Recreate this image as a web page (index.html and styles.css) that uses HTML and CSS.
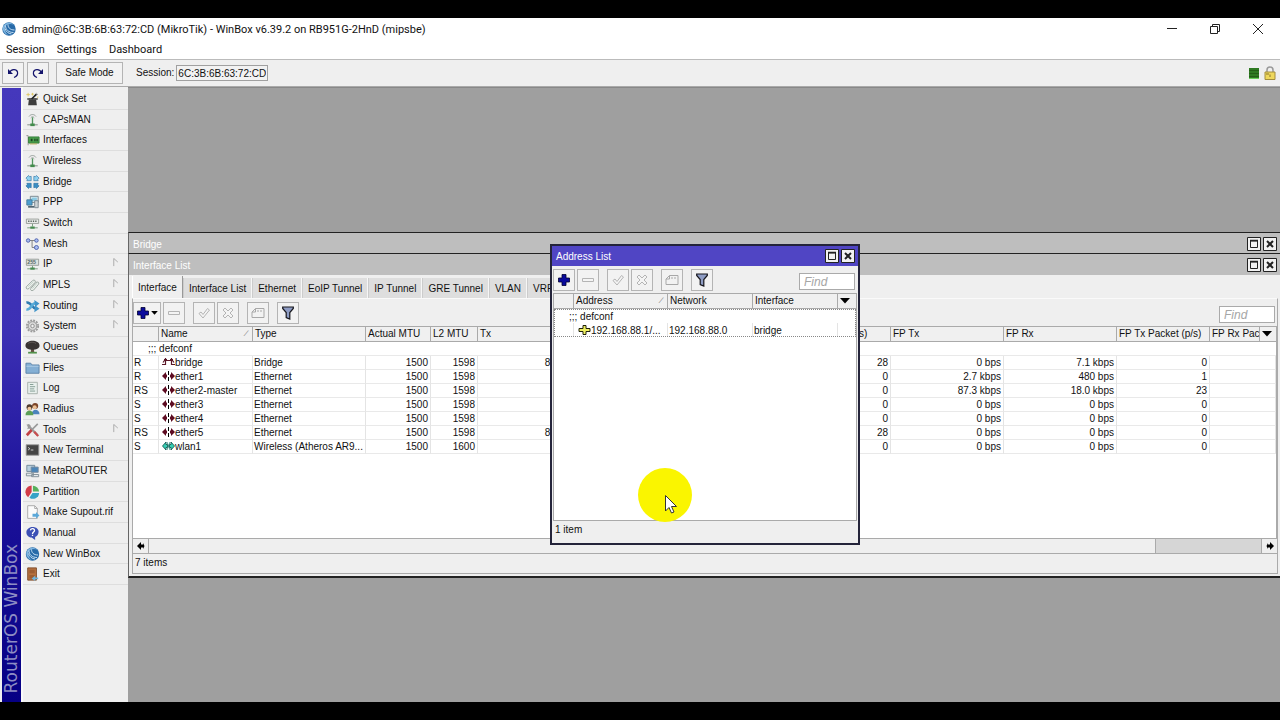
FILE: index.html
```html
<!DOCTYPE html>
<html lang="en">
<head>
<meta charset="utf-8">
<title>WinBox</title>
<link rel="stylesheet" href="styles.css">
</head>
<body>
<svg class="defs" aria-hidden="true">
  <defs>
    <symbol id="plus" viewBox="0 0 12 12"><path d="M4 .5h4V4h3.500v4H8v3.500H4V8H.5V4H4z" fill="#0a0a9c" stroke="#000030" stroke-width=".8"/></symbol>
    <symbol id="minus" viewBox="0 0 12 12"><path d="M.5 4.500h11v3H.5z" fill="#f4f4f4" stroke="#b4b4b4"/></symbol>
    <symbol id="check" viewBox="0 0 12 12"><path d="M1 6.500 3 5l2 2.500L9.500 1.500l2 1.500L5 11z" fill="#f4f4f4" stroke="#b4b4b4"/></symbol>
    <symbol id="cross" viewBox="0 0 12 12"><path d="M1 3 3 1l3 3 3-3 2 2-3 3 3 3-2 2-3-3-3 3-2-2 3-3z" fill="#f4f4f4" stroke="#b4b4b4"/></symbol>
    <symbol id="note" viewBox="0 0 14 12"><path d="M1 10.500V5l3.500-3.500H13v9zM1 5h3.500V1.500M6 4h2M9 4h2" fill="none" stroke="#a8a8a8"/></symbol>
    <symbol id="funnel" viewBox="0 0 12 14"><path d="M.7 1h10.600v1.500L7.800 6.500V13L4.200 11.500v-5L.7 2.500z" fill="#8e9cc4" stroke="#16161c" stroke-width="1.200"/></symbol>
    <symbol id="max" viewBox="0 0 14 14"><path d="M.5.5h13v13H.5z" fill="#f2f2f2" stroke="#222"/><path d="M3.500 4h7v6.500h-7z" fill="#f2f2f2" stroke="#222"/><path d="M3 3.500h8" stroke="#222" stroke-width="1.500"/></symbol>
    <symbol id="close" viewBox="0 0 14 14"><path d="M.5.5h13v13H.5z" fill="#f2f2f2" stroke="#222"/><path d="m4 4 6 6m0-6-6 6" stroke="#222" stroke-width="2"/></symbol>
    <symbol id="eth" viewBox="0 0 13 10"><path d="M0 5 4 1v2.500h1v3H4V9zM13 5 9 1v2.500H8v3h1V9z" fill="#5e0c22"/><path d="M6.500 0v4m0 2v4" stroke="#000"/></symbol>
    <symbol id="wlan" viewBox="0 0 13 10"><path d="M.5 5 4 1v2.500h1.500v3H4V9zM12.500 5 9 1v2.500H7.500v3H9V9z" fill="#35d0b4" stroke="#0e4d47" stroke-width=".8"/><path d="m5 1 3 8M8 1 5 9" stroke="#168071" stroke-width=".7"/></symbol>
    <symbol id="brg" viewBox="0 0 13 10"><path d="M0 7.500h4m5 0h4M3.500 1v7m6-7v7M3.500 3.500h6M1 5.500 3.500 2m8.500 3.500L9.500 2M2 2.500h3m3 0h3" fill="none" stroke="#5a1626" stroke-width="1.200"/></symbol>
    <symbol id="addr" viewBox="0 0 12 10"><path d="M4.500.5h3v3h4v3h-4v3h-3v-3h-4v-3h4z" fill="#eef062" stroke="#20200a"/></symbol>
    <symbol id="left" viewBox="0 0 8 8"><path d="M0 4 4 0v2.500h2V1l1.500 3L6 7V5.500H4V8z" fill="#000"/></symbol>
    <symbol id="tri" viewBox="0 0 10 6"><path d="M0 0h10L5 5.500z" fill="#000"/></symbol>
    <symbol id="ball" viewBox="0 0 14 14"><circle cx="7" cy="7" r="6.700" fill="#276aa8"/><path d="M1 5a6.500 6.500 0 0 1 11-2C9 1 4 2 3 5s1 6 3 8A6.700 6.700 0 0 1 1 5z" fill="#7fb6e0"/><path d="M3.500 3.500c0 4 3 7 8 7M6 2.500c0 3 2 5.500 6.500 5.500M3 6.500c1 3.500 3.500 5 6.500 5.500" fill="none" stroke="#d4eafa" stroke-width=".9"/></symbol>
    <symbol id="i-wand" viewBox="0 0 16 16"><path d="M4 7h8l1 8H3z" fill="#3d3d3d"/><path d="M2 7h12v2H2z" fill="#555"/><path d="m7 8 6.500-6.500" stroke="#222" stroke-width="2"/><path d="m12.500 2.500 1.500-1.500" stroke="#eee" stroke-width="1.500"/><path d="M3 1v4M1 3h4M8 1v3M6.500 2.500h3M14 5v2" stroke="#dfc65e"/></symbol>
    <symbol id="i-ant" viewBox="0 0 16 16"><path d="M4 4c2-3 6-3 8 0M6 5.500c1-1.500 3-1.500 4 0" fill="none" stroke="#8b9590"/><path d="M8 5v8" stroke="#51945d" stroke-width="1.500"/><path d="M2 13.500h12" stroke="#8a958d" stroke-width="1.200"/><path d="M5.500 12h5v3h-5z" fill="#428c4c"/></symbol>
    <symbol id="i-card" viewBox="0 0 16 16"><path d="M1 3h2v11" fill="none" stroke="#8d8d8d"/><path d="M3.500 4.500h12v7h-12z" fill="#4aa04d" stroke="#327b37"/><path d="M6 6.500h2v3H6zm4 0h1.500v3H10zm2.500 0H14v3h-1.500z" fill="#1c4322"/><path d="M5 12.500h8" stroke="#b9a94f"/></symbol>
    <symbol id="i-bridge" viewBox="0 0 16 16"><g stroke="#2c6f9f" stroke-width=".7"><path d="M.5 3.500 3.500.5l1 1.500 2-.5v5h-5L2 5z" fill="#8fd1f0"/><path d="m15.500 3.500-3-3-1 1.500-2-.5v5h5L14 5z" fill="#8fd1f0"/><path d="m.5 12.500 3 3 1-1.500 2 .5v-5h-5L2 11z" fill="#3b8ec4"/><path d="m15.500 12.500-3 3-1-1.500-2 .5v-5h5L14 11z" fill="#3b8ec4"/></g></symbol>
    <symbol id="i-ppp" viewBox="0 0 16 16"><path d="M5.500 1.500h9v7h-9z" fill="#dce8ee" stroke="#71808a"/><path d="M7 3h6v4H7z" fill="#8ccbe4"/><path d="M1.500 5.500h6v6h-6z" fill="#4d9ed0" stroke="#437996"/><path d="M10.500 6.500h4v8h-4z" fill="#ccd3d6" stroke="#75818a"/><path d="M3 13.500h7" stroke="#516572" stroke-width="2"/></symbol>
    <symbol id="i-switch" viewBox="0 0 16 16"><path d="M1 3.500h14v5H1z" fill="#e9ecea" stroke="#929894"/><path d="M3 6h10" stroke="#59635d" stroke-width="1.500" stroke-dasharray="1.500 1.200"/><path d="M8 9v3M2 13.500h12" stroke="#6d9775"/><path d="M5.500 12h5v2.500h-5z" fill="#478b50"/></symbol>
    <symbol id="i-ip" viewBox="0 0 16 16"><path d="M1 2.500h14v7H1z" fill="#dce3df" stroke="#929894"/><text x="2" y="8.500" class="tiny">255</text><path d="M8 10v3M2 13.500h12" stroke="#6d9775"/><path d="M5.500 12h5v2.500h-5z" fill="#478b50"/></symbol>
    <symbol id="i-mesh" viewBox="0 0 16 16"><path d="M4 4h8M7.500 4v8H12" fill="none" stroke="#777"/><g fill="#a9bdf0" stroke="#4659aa"><circle cx="3" cy="4" r="2"/><circle cx="12.500" cy="4" r="2"/><circle cx="12.500" cy="12" r="2.300"/></g></symbol>
    <symbol id="i-mpls" viewBox="0 0 16 16"><path d="m1 10 7-7c2-1.500 4 0 3 2l-7 7c-2 1.500-4 0-3-2zM6 12l6-7c2-1 4 0 3 2l-6 7c-2 1-4 0-3-2z" fill="#edf2ee" stroke="#929f98"/><path d="m3 10 6-6m-1 8 5-6" stroke="#bdcbc2"/></symbol>
    <symbol id="i-route" viewBox="0 0 16 16"><path d="M1 4c6-1 6 7 11 7" fill="none" stroke="#2f7bb1" stroke-width="3"/><path d="M1 12C7 13 6 5 11 5" fill="none" stroke="#59acd8" stroke-width="3"/><path d="M10 1l6 4-5 4zM11 7l5 4-6 4z" fill="#4295c9"/></symbol>
    <symbol id="i-gear" viewBox="0 0 16 16"><circle cx="8" cy="8" r="6.500" fill="none" stroke="#9b9b9b" stroke-width="2" stroke-dasharray="2.200 1.200"/><circle cx="8" cy="8" r="5" fill="#d9d9d9" stroke="#888"/><circle cx="8" cy="8" r="2" fill="#f1f1f1" stroke="#888"/></symbol>
    <symbol id="i-tree" viewBox="0 0 16 16"><path d="M6.500 9h3l.5 5h-4z" fill="#664f43"/><path d="M0 6c0-7 16-7 16 0 1 7-17 7-16 0z" fill="#393433"/><path d="M3 4c2-2 7-2 9 0" stroke="#625c58" fill="none"/><path d="M3 14.500h10" stroke="#53924c" stroke-width="2"/></symbol>
    <symbol id="i-folder" viewBox="0 0 16 16"><path d="M.5 14V2.500H6l1.500 2h8V14z" fill="#84afd4" stroke="#577fa5"/><path d="M1 6h14" stroke="#b4d1e9"/></symbol>
    <symbol id="i-log" viewBox="0 0 16 16"><path d="M2.500 1.500h11v13h-11z" fill="#e9f0ed" stroke="#a1aca6"/><path d="M5 4h4M5 6.500h6M5 9h5M5 11.500h6" stroke="#78958a"/></symbol>
    <symbol id="i-users" viewBox="0 0 16 16"><path d="M7 14c0-7 9-7 9 0z" fill="#4c84bd"/><circle cx="11" cy="4.500" r="3.500" fill="#7b4428"/><circle cx="10.500" cy="6" r="2.300" fill="#eabf94"/><path d="M0 15c0-7 9-7 9 0z" fill="#5b9f56"/><circle cx="4.500" cy="6" r="3.300" fill="#4f3b2c"/><circle cx="4.500" cy="7.500" r="2.200" fill="#eec49b"/></symbol>
    <symbol id="i-tools" viewBox="0 0 16 16"><path d="M3 3l11 11" stroke="#9a9a9a" stroke-width="2.500"/><path d="M1 2l3-1 2 2-1 3-3 1 1-3z" fill="#999"/><path d="m14 1-8 8" stroke="#999" stroke-width="1.800"/><path d="m7 8-5.500 6" stroke="#c24144" stroke-width="3"/><path d="m10 10 4.500 5" stroke="#c94d4f" stroke-width="2.500"/></symbol>
    <symbol id="i-term" viewBox="0 0 16 16"><path d="M.8 2h14.400v12H.8z" fill="#454545" stroke="#9b9b9b"/><path d="m3 5 2 1.500L3 8m3 0h3" fill="none" stroke="#ddd"/></symbol>
    <symbol id="i-meta" viewBox="0 0 16 16"><path d="M1.500 1.500h9v7h-9z" fill="#b7cfdf" stroke="#6d8494"/><path d="M6.500 3.500h8v6h-8z" fill="#4c86b9" stroke="#77899a"/><path d="M1 10.500h8v3H1zM7 12h8v2.500H7z" fill="#e3e9ed" stroke="#7a8891"/></symbol>
    <symbol id="i-pie" viewBox="0 0 16 16"><path d="M7 8V.5A7.500 7.500 0 0 0 3 14z" fill="#d13b47"/><path d="M8.500 7.500V1A7 7 0 0 1 15.500 7.500z" fill="#56b05c"/><path d="M8 9h7.500a7 7 0 0 1-11 5.500z" fill="#35a2c7"/></symbol>
    <symbol id="i-page" viewBox="0 0 16 16"><path d="M2.500.8h8l3 3v11.500h-11z" fill="#fbfbfb" stroke="#a4a4a4"/><path d="M10.500 1v3h3" fill="none" stroke="#a4a4a4"/><path d="M8 10h4V8l4 4-4 3.500V13.500H8z" fill="#5ba8d9"/></symbol>
    <symbol id="i-help" viewBox="0 0 16 16"><path d="M8 1c4.500 0 7 2.500 7 5.500S13 12 11 12.500V16l-4-3c-4 0-6-3-6-6s3-6 7-6z" fill="#3c50b5"/><path d="M5.700 5c.2-3 5-2.500 4.600.2C10 7 8 6.800 8 9m0 1v1.500" fill="none" stroke="#fff" stroke-width="1.500"/></symbol>
    <symbol id="i-door" viewBox="0 0 16 16"><path d="M2.500 1h10v14h-10z" fill="#b5713f" stroke="#7b4826"/><path d="M4.500 3h6v4h-6zm0 6h6v4h-6z" fill="#9c5d32"/><path d="M14.500 12H11v-2l-4 3 4 3v-2h3.500z" fill="#6eb5df"/></symbol>
    <symbol id="i-undo" viewBox="0 0 12 12"><path d="M2.500 5.500C4 2 9.500 1.500 10.500 5c.5 2.500-1 4.500-3.500 5.500" fill="none" stroke="#14146c" stroke-width="1.200"/><path d="M1 2v5h5z" fill="#14146c"/></symbol>
    <symbol id="sub" viewBox="0 0 6 10"><path d="M.5 9V.5l4.500 4" fill="none" stroke="#a6a6a6"/></symbol>
  </defs>
</svg>

<div class="app">
  <header class="titlebar">
    <svg class="logo"><use href="#ball"/></svg>
    <h1>admin@6C:3B:6B:63:72:CD (MikroTik) - WinBox v6.39.2 on RB951G-2HnD (mipsbe)</h1>
    <div class="syscontrols">
      <button aria-label="Minimize"><svg viewBox="0 0 12 12"><path d="M1 5.500h10" stroke="#222"/></svg></button>
      <button aria-label="Restore"><svg viewBox="0 0 12 12"><path d="M1.500 3.500h7v7h-7zM3.500 3.500v-2h7v7h-2" fill="none" stroke="#222"/></svg></button>
      <button aria-label="Close"><svg viewBox="0 0 12 12"><path d="m1 1 10 10M11 1 1 11" stroke="#222"/></svg></button>
    </div>
  </header>
  <nav class="menubar"><button>Session</button><button>Settings</button><button>Dashboard</button></nav>
  <div class="toolbar">
    <button class="tb icon" aria-label="Undo"><svg><use href="#i-undo"/></svg></button>
    <button class="tb icon" aria-label="Redo"><svg class="flip"><use href="#i-undo"/></svg></button>
    <button class="tb safe">Safe Mode</button>
    <label for="session">Session:</label>
    <input id="session" class="session" value="6C:3B:6B:63:72:CD" readonly>
    <span class="load"></span>
    <svg class="lock" viewBox="0 0 12 14"><path d="M3 6V4c0-4 6-4 6 0v2" fill="none" stroke="#999" stroke-width="1.500"/><path d="M1 6h10v7.500H1z" fill="#efd85c" stroke="#a48e3c"/><path d="M6 8.500v2.500M2 8h3" stroke="#8b762a"/></svg>
  </div>

  <div class="body">
    <div class="brand"><span>RouterOS WinBox</span></div>
    <aside class="side">
      <ul>
        <li><button><svg><use href="#i-wand"/></svg>Quick Set</button></li>
        <li><button><svg><use href="#i-ant"/></svg>CAPsMAN</button></li>
        <li><button><svg><use href="#i-card"/></svg>Interfaces</button></li>
        <li><button><svg><use href="#i-ant"/></svg>Wireless</button></li>
        <li><button><svg><use href="#i-bridge"/></svg>Bridge</button></li>
        <li><button><svg><use href="#i-ppp"/></svg>PPP</button></li>
        <li><button><svg><use href="#i-switch"/></svg>Switch</button></li>
        <li><button><svg><use href="#i-mesh"/></svg>Mesh</button></li>
        <li><button><svg><use href="#i-ip"/></svg>IP<svg class="sub"><use href="#sub"/></svg></button></li>
        <li><button><svg><use href="#i-mpls"/></svg>MPLS<svg class="sub"><use href="#sub"/></svg></button></li>
        <li><button><svg><use href="#i-route"/></svg>Routing<svg class="sub"><use href="#sub"/></svg></button></li>
        <li><button><svg><use href="#i-gear"/></svg>System<svg class="sub"><use href="#sub"/></svg></button></li>
        <li><button><svg><use href="#i-tree"/></svg>Queues</button></li>
        <li><button><svg><use href="#i-folder"/></svg>Files</button></li>
        <li><button><svg><use href="#i-log"/></svg>Log</button></li>
        <li><button><svg><use href="#i-users"/></svg>Radius</button></li>
        <li><button><svg><use href="#i-tools"/></svg>Tools<svg class="sub"><use href="#sub"/></svg></button></li>
        <li><button><svg><use href="#i-term"/></svg>New Terminal</button></li>
        <li><button><svg><use href="#i-meta"/></svg>MetaROUTER</button></li>
        <li><button><svg><use href="#i-pie"/></svg>Partition</button></li>
        <li><button><svg><use href="#i-page"/></svg>Make Supout.rif</button></li>
        <li><button><svg><use href="#i-help"/></svg>Manual</button></li>
        <li><button><svg><use href="#ball"/></svg>New WinBox</button></li>
        <li><button><svg><use href="#i-door"/></svg>Exit</button></li>
      </ul>
    </aside>

    <main class="desktop">
      <section class="win bridge-win">
        <div class="wintitle"><h2>Bridge</h2><button aria-label="Maximize"><svg><use href="#max"/></svg></button><button aria-label="Close"><svg><use href="#close"/></svg></button></div>
      </section>

      <section class="win iface-win">
        <div class="wintitle"><h2>Interface List</h2><button aria-label="Maximize"><svg><use href="#max"/></svg></button><button aria-label="Close"><svg><use href="#close"/></svg></button></div>
        <div class="tabs" role="tablist">
          <button role="tab" class="on">Interface</button><button role="tab">Interface List</button><button role="tab">Ethernet</button><button role="tab">EoIP Tunnel</button><button role="tab">IP Tunnel</button><button role="tab">GRE Tunnel</button><button role="tab">VLAN</button><button role="tab">VRRP</button>
        </div>
        <div class="panel">
          <div class="tools">
            <button class="tb add" aria-label="Add"><svg><use href="#plus"/></svg><svg class="drop"><use href="#tri"/></svg></button>
            <button class="tb" aria-label="Remove"><svg><use href="#minus"/></svg></button>
            <button class="tb gap" aria-label="Enable"><svg><use href="#check"/></svg></button>
            <button class="tb" aria-label="Disable"><svg><use href="#cross"/></svg></button>
            <button class="tb gap" aria-label="Comment"><svg class="wide"><use href="#note"/></svg></button>
            <button class="tb gap" aria-label="Filter"><svg class="tall"><use href="#funnel"/></svg></button>
            <input class="find" placeholder="Find" aria-label="Find">
          </div>
          <div class="list">
            <table>
              <colgroup><col class="c26"><col class="c94"><col class="c113"><col class="c65"><col class="c47"><col class="c113"><col class="c112"><col class="c94"><col class="c94"><col class="c113"><col class="c113"><col class="c93"><col class="c50"><col></colgroup>
              <thead><tr><th></th><th><span class="sorted">Name<i>∕</i></span></th><th>Type</th><th>Actual MTU</th><th>L2 MTU</th><th>Tx</th><th></th><th></th><th>Rx Packet (p/s)</th><th>FP Tx</th><th>FP Rx</th><th>FP Tx Packet (p/s)</th><th>FP Rx Pac</th><th class="pick"><svg><use href="#tri"/></svg></th></tr></thead>
              <tbody>
                <tr class="note"><td colspan="14">;;; defconf</td></tr>
                <tr><td>R</td><td class="ic"><svg><use href="#brg"/></svg>bridge</td><td>Bridge</td><td>1500</td><td>1598</td><td>87.3 kbps</td><td></td><td></td><td>28</td><td>0 bps</td><td>7.1 kbps</td><td>0</td><td colspan="2"></td></tr>
                <tr><td>R</td><td class="ic"><svg><use href="#eth"/></svg>ether1</td><td>Ethernet</td><td>1500</td><td>1598</td><td></td><td></td><td></td><td>0</td><td>2.7 kbps</td><td>480 bps</td><td>1</td><td colspan="2"></td></tr>
                <tr><td>RS</td><td class="ic"><svg><use href="#eth"/></svg>ether2-master</td><td>Ethernet</td><td>1500</td><td>1598</td><td></td><td></td><td></td><td>0</td><td>87.3 kbps</td><td>18.0 kbps</td><td>23</td><td colspan="2"></td></tr>
                <tr><td>S</td><td class="ic"><svg><use href="#eth"/></svg>ether3</td><td>Ethernet</td><td>1500</td><td>1598</td><td></td><td></td><td></td><td>0</td><td>0 bps</td><td>0 bps</td><td>0</td><td colspan="2"></td></tr>
                <tr><td>S</td><td class="ic"><svg><use href="#eth"/></svg>ether4</td><td>Ethernet</td><td>1500</td><td>1598</td><td></td><td></td><td></td><td>0</td><td>0 bps</td><td>0 bps</td><td>0</td><td colspan="2"></td></tr>
                <tr><td>RS</td><td class="ic"><svg><use href="#eth"/></svg>ether5</td><td>Ethernet</td><td>1500</td><td>1598</td><td>87.3 kbps</td><td></td><td></td><td>28</td><td>0 bps</td><td>0 bps</td><td>0</td><td colspan="2"></td></tr>
                <tr><td>S</td><td class="ic"><svg><use href="#wlan"/></svg>wlan1</td><td>Wireless (Atheros AR9...</td><td>1500</td><td>1600</td><td></td><td></td><td></td><td>0</td><td>0 bps</td><td>0 bps</td><td>0</td><td colspan="2"></td></tr>
              </tbody>
            </table>
          </div>
          <div class="scroll"><button aria-label="Scroll left"><svg><use href="#left"/></svg></button><div class="track"><div class="thumb"></div></div><button aria-label="Scroll right"><svg class="flip"><use href="#left"/></svg></button></div>
          <div class="status">7 items</div>
        </div>
      </section>

      <section class="win addr-win">
        <div class="wintitle"><h2>Address List</h2><button aria-label="Maximize"><svg><use href="#max"/></svg></button><button aria-label="Close"><svg><use href="#close"/></svg></button></div>
        <div class="tools">
          <button class="tb" aria-label="Add"><svg><use href="#plus"/></svg></button>
          <button class="tb" aria-label="Remove"><svg><use href="#minus"/></svg></button>
          <button class="tb gap" aria-label="Enable"><svg><use href="#check"/></svg></button>
          <button class="tb" aria-label="Disable"><svg><use href="#cross"/></svg></button>
          <button class="tb gap" aria-label="Comment"><svg class="wide"><use href="#note"/></svg></button>
          <button class="tb gap" aria-label="Filter"><svg class="tall"><use href="#funnel"/></svg></button>
          <input class="find" placeholder="Find" aria-label="Find">
        </div>
        <div class="list">
          <table>
            <colgroup><col class="c20"><col class="c94"><col class="c85"><col class="c85"><col></colgroup>
            <thead><tr><th></th><th><span class="sorted">Address<i>∕</i></span></th><th>Network</th><th>Interface</th><th class="pick"><svg><use href="#tri"/></svg></th></tr></thead>
            <tbody class="picked">
              <tr class="note"><td colspan="5">;;; defconf</td></tr>
              <tr><td></td><td class="ic"><svg><use href="#addr"/></svg>192.168.88.1/...</td><td>192.168.88.0</td><td>bridge</td><td></td></tr>
            </tbody>
          </table>
        </div>
        <div class="status">1 item</div>
      </section>

      <svg class="pointer" viewBox="0 0 54 54"><circle cx="27" cy="27" r="27" fill="#faf500"/><path d="M27.500 27.500v15.500l3.500-3.500 2.500 5.500 2.500-1-2.500-5.500h5z" fill="#fff" stroke="#333"/></svg>
    </main>
  </div>
</div>
</body>
</html>
```
FILE: styles.css
```css
* { box-sizing: border-box; }
body { margin: 0; background: #000; color: #111; font: 10px/14px "Liberation Sans", Arial, sans-serif; }
button, input { font: inherit; color: inherit; }
button { border: 0; background: none; padding: 0; }
h1, h2, ul { margin: 0; padding: 0; font-weight: normal; }
svg { display: block; flex: none; }
.defs { position: absolute; width: 0; height: 0; }
.tiny { font: bold 6px "Liberation Sans", sans-serif; fill: #566; }
.flip { transform: scaleX(-1); }

.app { height: 100vh; display: flex; flex-direction: column; padding: 18px 0; }
.titlebar { display: flex; align-items: center; height: 22px; padding: 0 1px 0 2px; gap: 6px; background: #fff; }
.titlebar h1 { flex: 1; padding-top: 1px; font: 11px/20px Roboto, sans-serif; }
.logo { width: 14px; height: 14px; }
.syscontrols { display: flex; }
.syscontrols button { width: 43px; display: flex; justify-content: center; }
.syscontrols svg { width: 12px; height: 12px; }
.menubar { display: flex; height: 19px; gap: 12px; padding-left: 6px; background: #fff; font: 11px/18px Roboto, sans-serif; }
.toolbar { display: flex; align-items: center; height: 28px; padding: 0 4px 0 2px; background: #efefef; border-top: 1px solid #bbb; border-bottom: 1px solid #aaa; }
.tb { display: flex; align-items: center; justify-content: center; width: 22px; height: 22px; border: 1px solid #b4b4b4; background: #f2f2f2; }
.tb svg { width: 12px; height: 12px; }
.tb svg.wide { width: 14px; }
.tb svg.tall { height: 14px; }
.toolbar .icon { margin-right: 3px; }
.toolbar .safe { width: 67px; margin: 0 13px 0 4px; }
.session { width: 92px; height: 16px; margin-left: 2px; padding: 0 1px; border: 1px solid #a0a0a0; background: #f2f2f2; }
.load { width: 10px; height: 11px; margin: 0 5px 0 auto; background: repeating-linear-gradient(#2f7a22 0 2px, #246018 2px 3px); border-bottom: 1px solid #6ad05c; }
.lock { width: 12px; height: 14px; }

.body { flex: 1; display: flex; min-height: 0; background: #efefef; }
.brand { width: 19px; margin: 1px 0 0 2px; display: flex; align-items: flex-end; justify-content: center; padding-bottom: 9px; background: linear-gradient(#4538bc, #3c30b4 40%, #1c129a 66%, #060084); }
.brand span { writing-mode: vertical-rl; transform: rotate(180deg); font: 17px/19px "DejaVu Sans", sans-serif; color: #8d8dc4; white-space: nowrap; }
.side { width: 107px; border-left: 2px solid #fafafa; }
.side ul { display: flex; flex-direction: column; height: 496px; margin-top: 2px; list-style: none; }
.side li { flex: 1; display: flex; border-bottom: 1px solid #dedede; }
.side button { flex: 1; display: flex; align-items: center; padding: 0 9px 0 2px; gap: 3px; text-align: left; }
.side svg { width: 15px; height: 14px; }
.side svg.sub { width: 6px; height: 9px; margin: 0 0 3px auto; }

.desktop { flex: 1; position: relative; overflow: hidden; background: #9f9f9f; border-top: 1px solid #888; }
.win { position: absolute; display: flex; flex-direction: column; background: #efefef; border: 1px solid #222; }
.bridge-win { left: 0; right: 0; top: 144px; height: 60px; }
.iface-win { left: 0; right: 0; top: 165px; height: 325px; border-bottom-width: 2px; }
.addr-win { left: 422px; top: 156px; width: 310px; height: 301px; border: 2px solid #24243a; padding: 0 1px; }
.bridge-win, .iface-win { border-left-color: #666; border-right: 0; }
.wintitle { display: flex; align-items: center; height: 21px; flex: none; gap: 2px; padding: 1px 3px 0 4px; background: #bebebe; color: #fff; }
.wintitle h2 { flex: 1; font-size: 10px; line-height: 14px; padding-top: 2px; }
.wintitle svg { width: 14px; height: 14px; }
.addr-win .wintitle { height: 20px; margin: 0 -1px; padding-top: 0; background: #5045c4; }

.tabs { display: flex; align-items: flex-end; height: 23px; padding: 1px 3px 0; }
.tabs button { height: 20px; padding: 1px 5px 0; background: #dedede; border-right: 1px solid #f6f6f6; border-left: 1px solid #ccc; }
.tabs .on { height: 22px; background: #efefef; border-left-color: #fff; border-right-color: #999; }
.panel { flex: 1; display: flex; flex-direction: column; min-height: 0; margin: 0 2px 2px 3px; border: 1px solid #aaa; border-top-color: #fafafa; }
.tools { display: flex; align-items: center; flex: none; height: 27px; gap: 2px; padding-right: 2px; }
.tools .gap { margin-left: 6px; }
.tools .add { width: 28px; gap: 2px; }
.tools .drop { width: 7px; height: 4px; }
.find { width: 56px; height: 17px; margin-left: auto; padding: 0 4px; border: 1px solid #aaa; background: #fff; font-size: 12px; font-style: italic; align-self: flex-end; margin-bottom: 3px; }
.find::placeholder { color: #a6a6a6; opacity: 1; }

.list { flex: 1; min-height: 0; overflow: hidden; background: #fff; border: 1px solid #aaa; border-left: 0; }
table { width: 100%; table-layout: fixed; border-collapse: separate; border-spacing: 0; }
th, td { height: 14px; padding: 0 2px 0 1px; overflow: hidden; white-space: nowrap; line-height: 13px; }
th { height: 15px; font-weight: normal; text-align: left; line-height: 14px; background: #f0f0f0; border-right: 1px solid #aaa; border-bottom: 1px solid #aaa; padding-left: 2px; padding-right: 0; }
td { border-right: 1px solid #e4e4e4; border-bottom: 1px solid #e9e9e9; }
.sorted { display: flex; justify-content: space-between; padding-right: 5px; }
.sorted i { font-size: 8px; color: #777; }
.pick { border-right: 0; }
.pick svg { width: 10px; height: 6px; }
td.ic svg { display: inline-block; width: 13px; height: 10px; margin-left: 2px; vertical-align: -1px; }
.iface-win td:nth-child(n+4) { text-align: right; }
.note td { padding-left: 15px; border-right: 0; }
.addr-win .list { border-left: 1px solid #aaa; }
.addr-win td { border-bottom: 0; }
.addr-win td.ic svg { margin-left: 3px; }
.picked { outline: 1px dotted #888; outline-offset: -1px; }
.c20 { width: 20px; } .c26 { width: 26px; } .c47 { width: 47px; } .c50 { width: 50px; } .c65 { width: 65px; }
.c85 { width: 85px; } .c93 { width: 93px; } .c94 { width: 94px; } .c112 { width: 112px; } .c113 { width: 113px; }

.scroll { display: flex; height: 15px; flex: none; border-bottom: 1px solid #aaa; }
.scroll button { width: 15px; display: flex; align-items: center; justify-content: center; }
.scroll svg { width: 8px; height: 8px; }
.track { flex: 1; display: flex; justify-content: flex-end; border: solid #aaa; border-width: 0 1px; }
.thumb { width: 106px; background: #d6d6d6; border-left: 1px solid #aaa; }
.status { flex: none; height: 19px; padding: 2px; }
.addr-win .status { height: 22px; }
.pointer { position: absolute; left: 510px; top: 380px; width: 54px; height: 54px; }
```
